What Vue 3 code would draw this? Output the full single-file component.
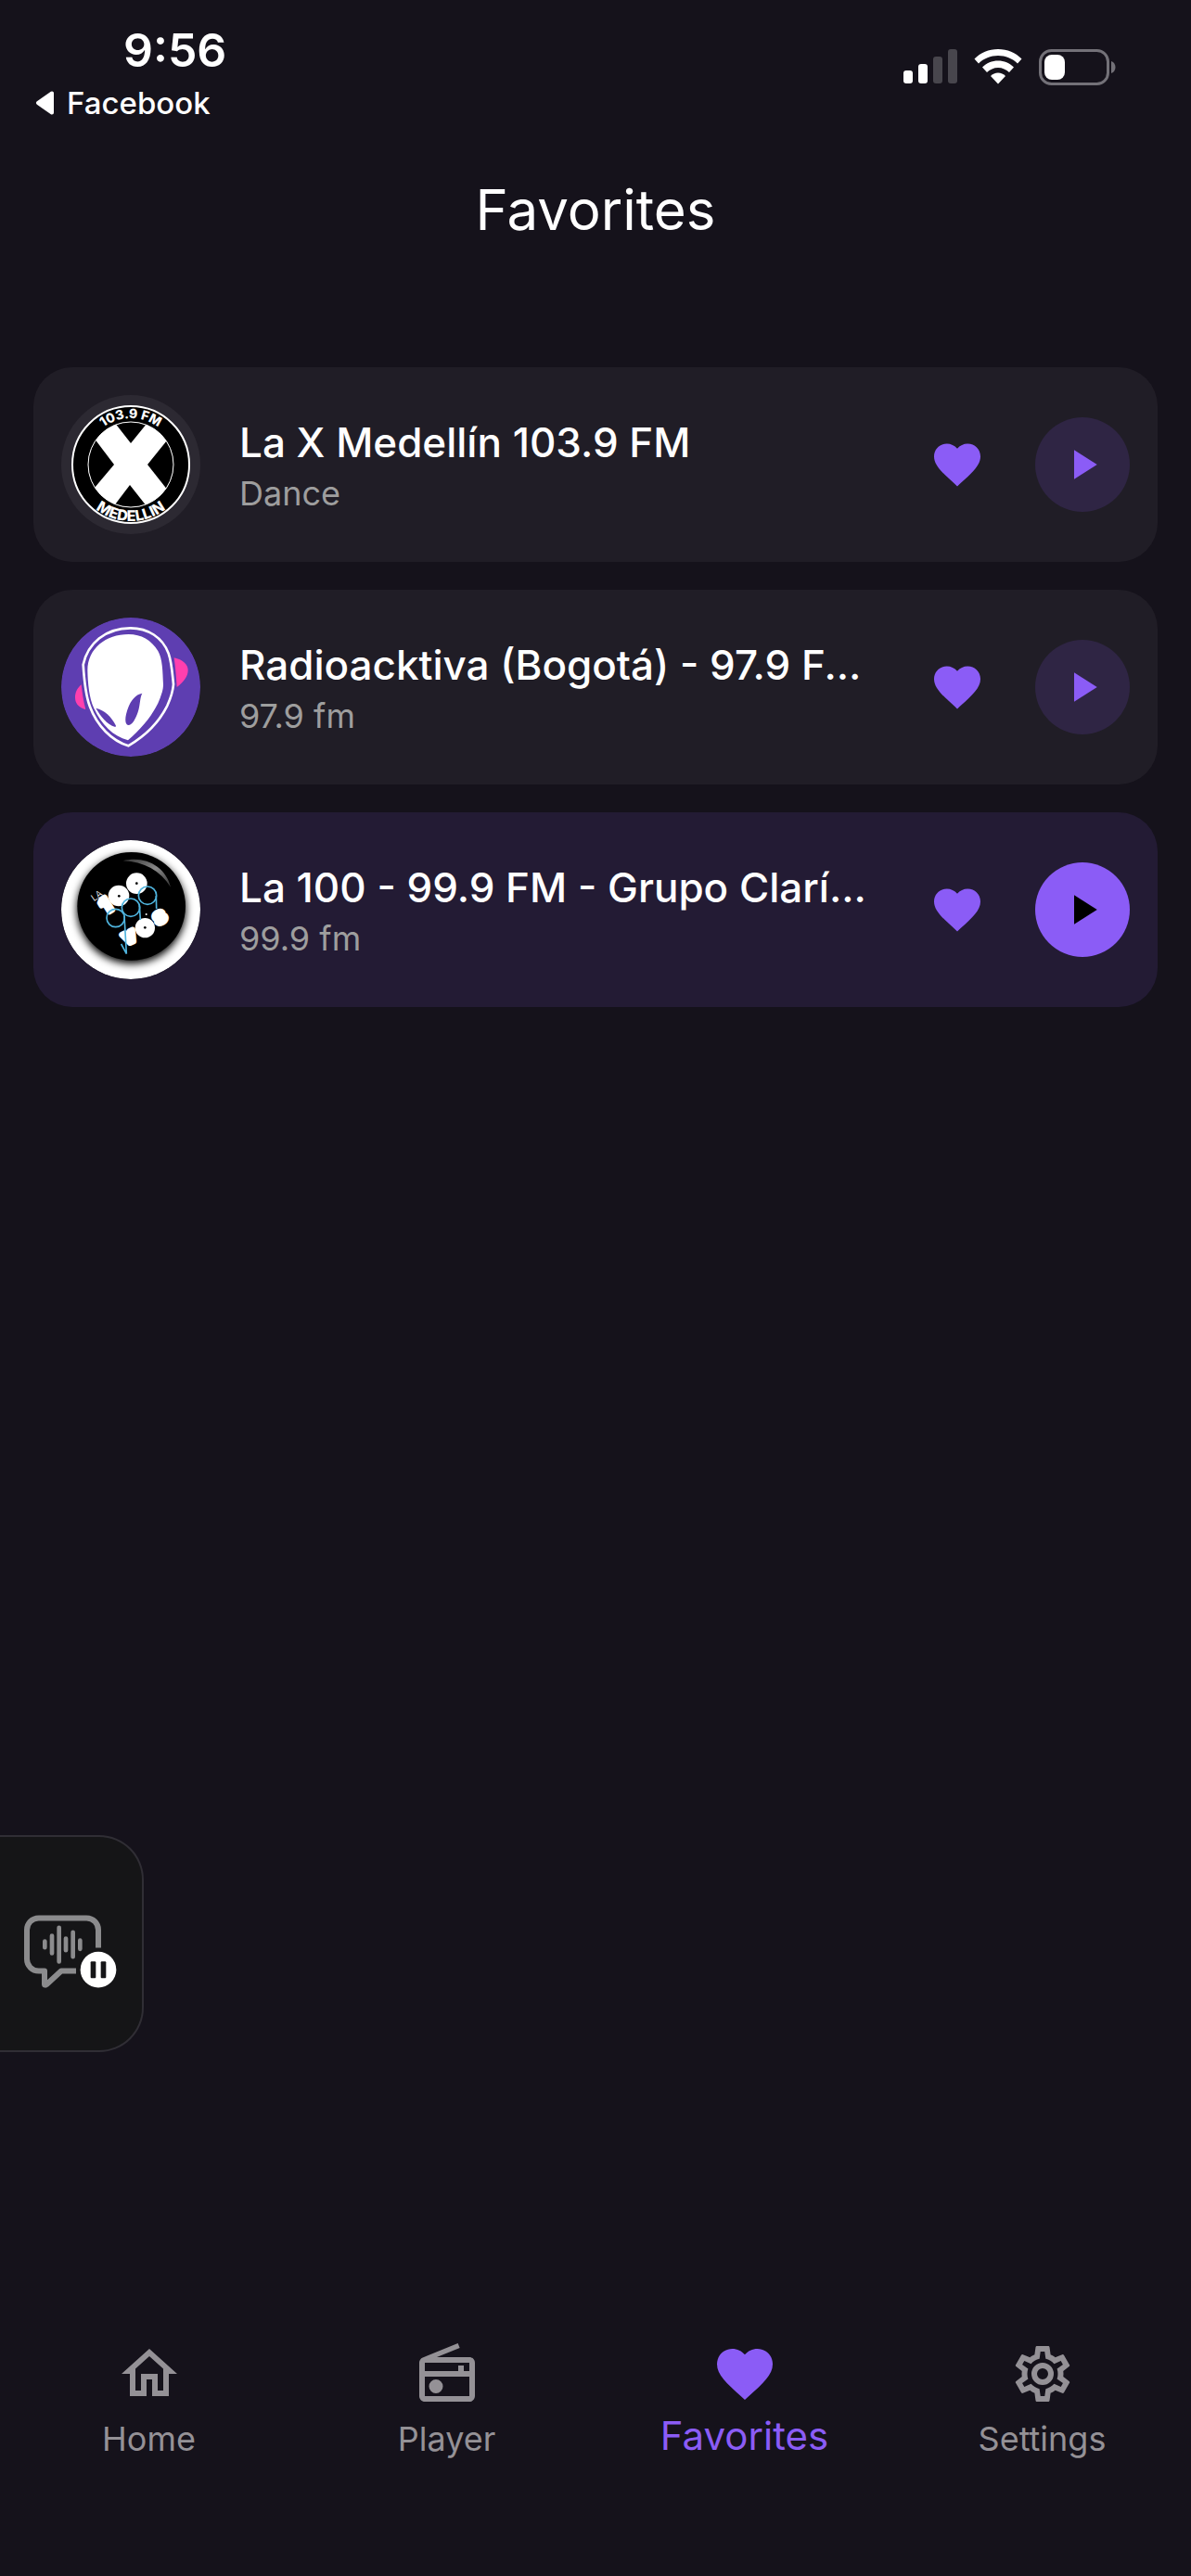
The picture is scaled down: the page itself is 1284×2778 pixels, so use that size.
<template>
  <div class="app">
    <header class="status-bar">
      <div class="status-left">
        <span class="clock">9:56</span>
        <a class="back-link" href="#">
          <svg class="back-arrow" viewBox="0 0 22 26" aria-hidden="true">
            <path d="M18 2.5v21L3 13z" fill="currentColor" stroke="currentColor" stroke-width="4" stroke-linejoin="round" />
          </svg>
          Facebook
        </a>
      </div>
      <div class="status-icons" aria-hidden="true">
        <svg class="signal" viewBox="0 0 58 38">
          <rect x="0" y="23" width="10" height="14" rx="3" />
          <rect x="16" y="16" width="10" height="21" rx="3" />
          <rect x="32" y="8" width="10" height="29" rx="3" opacity="0.22" />
          <rect x="48" y="0" width="10" height="37" rx="3" opacity="0.22" />
        </svg>
        <svg class="wifi" viewBox="0 0 52 38">
          <path d="M26 0C16 0 7 4 .5 10.500L5 15.500C10.500 10 18 7 26 7s15.500 3 21 8.500l4.500-5C45 4 36 0 26 0z" />
          <path d="M26 12.500c-6.500 0-12.500 2.500-17 7l5 5.500c3-3 7.500-5 12-5s9 2 12 5l5-5.500c-4.500-4.500-10.500-7-17-7z" />
          <path d="M26 25.500c-3 0-6 1.500-8 3.500l8 8.500 8-8.500c-2-2-5-3.500-8-3.500z" />
        </svg>
        <svg class="battery" viewBox="0 0 84 40">
          <rect x="1.500" y="1.500" width="73" height="36" rx="12" fill="none" stroke="#737178" stroke-width="3" />
          <rect x="6" y="6" width="22" height="27" rx="8" />
          <path d="M78 13c6 2 6 11 0 13z" fill="#737178" />
        </svg>
      </div>
    </header>

    <h1 class="page-title">Favorites</h1>

    <main class="station-list">
      <article
        v-for="station in stations"
        :key="station.id"
        class="station"
        :class="{ 'station-active': station.id === current }"
      >
        <div class="logo">
          <svg v-if="station.id === 'lax'" viewBox="0 0 150 150" aria-hidden="true">
            <defs>
              <clipPath id="lax-clip"><circle cx="75" cy="75" r="46" /></clipPath>
              <path id="lax-top" d="M25 75a50 50 0 0 1 100 0" />
              <path id="lax-bottom" d="M14 75a61 61 0 0 0 122 0" />
            </defs>
            <circle cx="75" cy="75" r="63" fill="#000" stroke="#fff" stroke-width="2" />
            <circle cx="75" cy="75" r="46" fill="#fff" />
            <g clip-path="url(#lax-clip)" fill="#000">
              <path d="M50 20l25 32 26-32z" />
              <path d="M20 26l37 49-37 44z" />
              <path d="M49 130l25-33 26 33z" />
              <path d="M130 29L93 75l37 47z" />
            </g>
            <circle cx="75" cy="75" r="46" fill="none" stroke="#fff" />
            <text class="badge-text badge-top"><textPath href="#lax-top" startOffset="50%">103.9 FM</textPath></text>
            <text class="badge-text badge-bottom"><textPath href="#lax-bottom" startOffset="50%">MEDELLIN</textPath></text>
          </svg>

          <svg v-else-if="station.id === 'radioacktiva'" viewBox="48 48 450 450" aria-hidden="true">
            <circle cx="273" cy="273" r="225" fill="#5e3eb1" />
            <path d="M413 178c28 6 45 22 45 40 0 20-14 38-36 55-2-30-4-60-9-95z" fill="#ff3fae" />
            <path d="M113 265c-14 12-20 26-20 42 0 20 13 33 34 38-7-26-11-52-14-80z" fill="#ff3fae" />
            <path
              d="M272 82C190 82 134 132 119 200c3 46 6 94 21 134 24 66 72 112 125 129 56-33 100-77 126-130 10-22 18-44 20-69-4-38-6-72-16-100C376 112 328 82 272 82z"
              fill="#5e3eb1" stroke="#fff" stroke-width="8"
            />
            <path
              d="M266 102c-74 0-132 46-133 116 1 44 5 88 21 124 24 52 62 90 110 103 46-40 86-88 104-137 8-20 10-32 10-44-2-42-2-82-17-108-22-36-54-54-95-54z"
              fill="#fff"
            />
            <path d="M160 341c15 24 33 52 63 61 2-2 2-4 1-6-14-27-36-49-64-55z" fill="#5e3eb1" />
            <path d="M310 293c-27 4-44 34-52 68-4 16-3 34 6 35 14 1 24-20 32-42 8-24 6-48 14-61z" fill="#5e3eb1" />
          </svg>

          <svg v-else viewBox="48 48 450 450" aria-hidden="true">
            <defs>
              <filter id="button-shadow" x="-20%" y="-20%" width="140%" height="140%">
                <feGaussianBlur stdDeviation="12" />
              </filter>
              <linearGradient id="button-shine" x1="0" y1="0" x2="1" y2="1">
                <stop offset="0" stop-color="#333" />
                <stop offset="0.5" stop-color="#888" />
                <stop offset="1" stop-color="#333" />
              </linearGradient>
            </defs>
            <circle cx="273" cy="273" r="225" fill="#fff" />
            <circle cx="275" cy="272" r="176" filter="url(#button-shadow)" />
            <circle cx="275" cy="262" r="175" />
            <path d="M248 115c70-18 138 18 154 85-34-54-86-82-154-85z" fill="url(#button-shine)" />
            <g class="vos-fat">
              <circle cx="234" cy="228" r="30" />
              <circle cx="292" cy="188" r="30" />
              <circle cx="319" cy="332" r="28" />
              <text x="193" y="283" transform="rotate(-32 193 262)">1</text>
              <text x="268" y="380" transform="rotate(-25 268 360)">v</text>
              <text x="366" y="316" transform="rotate(-32 366 296)">s</text>
            </g>
            <g fill="#000">
              <circle cx="235" cy="229" r="4" />
              <circle cx="292" cy="188" r="4" />
              <circle cx="319" cy="331" r="4" />
            </g>
            <circle cx="323" cy="288" r="3" fill="#fff" />
            <text class="la-text" x="163" y="238" transform="rotate(-35 163 228)">LA</text>
            <g fill="none" stroke="#4fb4de" stroke-width="5">
              <circle cx="224" cy="300" r="29" />
              <circle cx="273" cy="266" r="29" />
              <circle cx="327" cy="227" r="29" />
              <path d="M252 292l7 124-17-32M301 260l3 46M355 228l1 42" />
            </g>
          </svg>
        </div>

        <div class="info">
          <h2 class="name">{{ station.name }}</h2>
          <p class="detail">{{ station.detail }}</p>
        </div>

        <button class="like-btn" type="button" aria-label="Remove from favorites">
          <svg viewBox="0 0 24 24" aria-hidden="true"><path :d="heartPath" /></svg>
        </button>
        <button class="play-btn" type="button" aria-label="Play" @click="current = station.id">
          <svg viewBox="0 0 24 24" aria-hidden="true"><path d="M8 5v14l11-7z" /></svg>
        </button>
      </article>
    </main>

    <button class="voice-panel" type="button" aria-label="Pause voice control">
      <svg viewBox="78 314 300 236" aria-hidden="true">
        <g fill="none" stroke="#8b8b8d" stroke-width="18">
          <path d="M318 420v-58a38 38 0 0 0-38-38H125a38 38 0 0 0-38 38v95a38 38 0 0 0 38 38h19v43c0 3 4 3 6 1l48-44h48" stroke-linejoin="round" />
          <path d="M145 399v20M168 381v57M191 355v110M213 390v38M236 370v79M259 396v28" stroke-width="14" stroke-linecap="round" />
        </g>
        <circle cx="318" cy="491" r="58" fill="#fff" />
        <rect x="293" y="464" width="17" height="54" rx="3" fill="#151517" />
        <rect x="326" y="464" width="17" height="54" rx="3" fill="#151517" />
      </svg>
    </button>

    <nav class="tab-bar">
      <a
        v-for="tab in tabs"
        :key="tab.label"
        class="tab"
        :class="{ 'tab-active': tab.label === 'Favorites' }"
        href="#"
      >
        <svg viewBox="0 0 24 24" aria-hidden="true"><path :d="tab.icon" /></svg>
        <span>{{ tab.label }}</span>
      </a>
    </nav>
  </div>
</template>

<script setup>
import { ref } from 'vue'

const heartPath = 'M12 21.35l-1.45-1.32C5.4 15.36 2 12.28 2 8.5 2 5.42 4.42 3 7.5 3c1.74 0 3.41.81 4.5 2.09C13.09 3.81 14.76 3 16.5 3 19.58 3 22 5.42 22 8.5c0 3.78-3.4 6.86-8.55 11.54L12 21.35z'

const stations = [
  { id: 'lax', name: 'La X Medellín 103.9 FM', detail: 'Dance' },
  { id: 'radioacktiva', name: 'Radioacktiva (Bogotá) - 97.9 F...', detail: '97.9 fm' },
  { id: 'la100', name: 'La 100 - 99.9 FM - Grupo Clarí...', detail: '99.9 fm' }
]

const current = ref('la100')

const tabs = [
  {
    label: 'Home',
    icon: 'M12 5.690l5 4.500V18h-2v-6H9v6H7v-7.810l5-4.500M12 3L2 12h3v8h6v-6h2v6h6v-8h3L12 3z'
  },
  {
    label: 'Player',
    icon: 'M20 6H8.300l8.260-3.340L15.880 1 3.240 6.150C2.510 6.430 2 7.170 2 8v12c0 1.100.890 2 2 2h16c1.100 0 2-.900 2-2V8c0-1.110-.900-2-2-2zm0 2v3h-2V9h-2v2H4V8h16zM4 20v-7h16v7H4zM8 14a2.500 2.500 0 0 0 0 5 2.500 2.500 0 0 0 0-5z'
  },
  { label: 'Favorites', icon: heartPath },
  {
    label: 'Settings',
    icon: 'M12 8a4 4 0 0 1 4 4 4 4 0 0 1-4 4 4 4 0 0 1-4-4 4 4 0 0 1 4-4m0 2a2 2 0 0 0-2 2 2 2 0 0 0 2 2 2 2 0 0 0 2-2 2 2 0 0 0-2-2m-2 12c-.25 0-.46-.18-.5-.42l-.37-2.65c-.63-.25-1.17-.59-1.69-.99l-2.49 1.01c-.22.08-.49 0-.61-.22l-2-3.46a.493.493 0 0 1 .12-.64l2.11-1.65L4.500 12l.07-1-2.11-1.63a.493.493 0 0 1-.12-.64l2-3.46c.12-.22.39-.31.61-.22l2.49 1c.52-.39 1.06-.73 1.69-.98l.37-2.65c.04-.24.25-.42.5-.42h4c.25 0 .46.18.5.42l.37 2.65c.63.25 1.17.59 1.69.98l2.49-1c.22-.09.49 0 .61.22l2 3.46c.13.22.07.49-.12.64L19.430 11l.07 1-.07 1 2.11 1.63c.19.15.25.42.12.64l-2 3.46c-.12.22-.39.31-.61.22l-2.49-1c-.52.39-1.06.73-1.69.98l-.37 2.65c-.04.24-.25.42-.5.42h-4m1.250-18l-.37 2.61c-1.200.25-2.260.89-3.030 1.780L5.440 7.350l-.75 1.300L6.800 10.200a5.550 5.550 0 0 0 0 3.600l-2.120 1.560.75 1.300 2.430-1.040c.77.88 1.820 1.520 3.010 1.760l.37 2.620h1.520l.37-2.610c1.190-.25 2.240-.89 3.010-1.770l2.430 1.040.75-1.300-2.120-1.550c.4-1.170.4-2.440 0-3.610l2.110-1.550-.75-1.300-2.410 1.040a5.420 5.420 0 0 0-3.030-1.770L12.750 4h-1.500z'
  }
]
</script>

<style>
body {
  background: #15121b;
}
</style>

<style scoped>
.app {
  display: flex;
  flex-direction: column;
  min-height: 100vh;
  background: #15121b;
  color: #fff;
  font-family: Inter, "Noto Sans", sans-serif;
}

svg {
  display: block;
}

button {
  padding: 0;
  border: none;
  cursor: pointer;
}

/* status bar */
.status-bar {
  display: flex;
  justify-content: space-between;
  align-items: flex-start;
  padding: 24px 80px 0 38px;
}

.status-left {
  display: flex;
  flex-direction: column;
  gap: 7px;
}

.clock {
  padding-left: 95px;
  font-size: 50px;
  font-weight: 600;
  line-height: 60px;
}

.back-link {
  display: flex;
  align-items: center;
  gap: 12px;
  color: #fff;
  font-size: 33px;
  font-weight: 500;
  line-height: 40px;
  text-decoration: none;
}

.back-arrow {
  width: 22px;
  height: 26px;
}

.status-icons {
  display: flex;
  gap: 18px;
  padding-top: 29px;
  fill: #fff;
}

.signal {
  width: 58px;
  height: 38px;
}

.wifi {
  width: 52px;
  height: 38px;
}

.battery {
  width: 84px;
  height: 40px;
}

.page-title {
  margin: 0;
  padding: 55px 36px 130px;
  font-size: 60px;
  font-weight: 400;
  line-height: 80px;
  text-align: center;
}

/* stations */
.station-list {
  display: flex;
  flex: 1;
  flex-direction: column;
  gap: 30px;
  padding: 0 36px;
}

.station {
  display: flex;
  align-items: center;
  padding: 30px;
  border-radius: 42px;
  background: #201d26;
}

.station-active {
  background: #231b34;
}

.logo {
  flex: none;
  width: 150px;
  height: 150px;
  border-radius: 50%;
  overflow: hidden;
  background: #2c2932;
}

.badge-text {
  fill: #fff;
  font-weight: 800;
  text-anchor: middle;
}

.badge-top {
  font-size: 14px;
}

.badge-bottom {
  font-size: 16px;
}

.vos-fat {
  fill: #fff;
  stroke: #fff;
  stroke-width: 8;
  stroke-linejoin: round;
  font-size: 66px;
  font-weight: 800;
  text-anchor: middle;
}

.vos-fat text {
  stroke-width: 18;
}

.la-text {
  fill: #fff;
  font-size: 30px;
  font-weight: 300;
  text-anchor: middle;
}

.info {
  display: flex;
  flex: 1;
  flex-direction: column;
  gap: 4px;
  min-width: 0;
  padding: 3px 0 0 42px;
}

.name,
.detail {
  margin: 0;
  overflow: hidden;
  white-space: nowrap;
}

.name {
  font-size: 44px;
  font-weight: 500;
  line-height: 54px;
}

.detail {
  color: #9e9e9e;
  font-size: 36px;
  font-weight: 400;
  line-height: 48px;
}

.like-btn {
  flex: none;
  margin: 0 54px;
  background: none;
}

.like-btn svg {
  width: 60px;
  height: 60px;
  fill: #8b5cf6;
}

.play-btn {
  display: flex;
  flex: none;
  align-items: center;
  justify-content: center;
  width: 102px;
  height: 102px;
  border-radius: 50%;
  background: #2f2544;
}

.play-btn svg {
  width: 54px;
  height: 54px;
  fill: #8b5cf6;
}

.station-active .play-btn {
  background: #8b5cf6;
}

.station-active .play-btn svg {
  fill: #000;
}

/* system panel docked to the left edge, floats over the page */
.voice-panel {
  position: fixed;
  bottom: 565px;
  left: 0;
  padding: 84px 27px 67px 26px;
  border: 2px solid #302e35;
  border-left: none;
  border-radius: 0 48px 48px 0;
  background: #151517;
}

.voice-panel svg {
  width: 100px;
  height: 79px;
}

/* bottom tabs */
.tab-bar {
  display: flex;
  padding: 24px 0 124px;
}

.tab {
  display: flex;
  flex: 1;
  flex-direction: column;
  align-items: center;
  gap: 10px;
  color: #949196;
  font-size: 36px;
  line-height: 48px;
  text-decoration: none;
}

.tab svg {
  width: 72px;
  height: 72px;
  fill: currentColor;
}

.tab-active {
  gap: 4px;
  color: #8b5cf6;
  font-size: 42px;
  line-height: 54px;
}
</style>
